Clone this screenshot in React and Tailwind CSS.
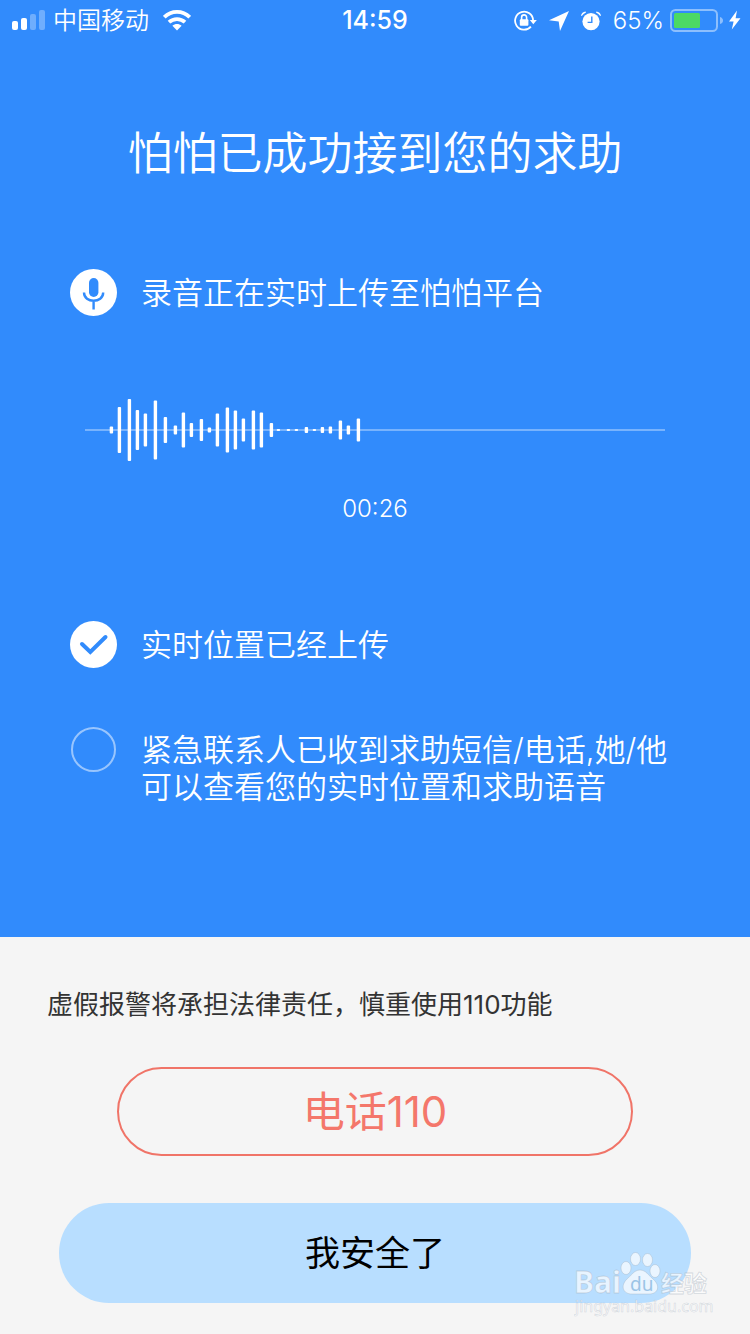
import React from 'react';

// [x, alto] de cada barra, centradas sobre la línea base
const BARS = [
  [26, 7], [34, 46], [44, 62], [52, 40], [60, 33], [70, 59], [80, 26], [90, 9],
  [98, 35], [106, 14], [116, 22], [124, 5], [132, 33], [142, 45], [150, 39], [158, 23],
  [168, 39], [176, 35], [186, 14], [193, 2], [203, 2], [211, 2], [221, 6], [229, 2],
  [237, 6], [245, 7], [255, 19], [263, 9], [273, 23],
];

const SignalIcon = () => (
  <svg width="34" height="22" viewBox="0 0 34 22" fill="#fff" aria-hidden="true">
    <rect x="0" y="11" width="6" height="9" rx="2" />
    <rect x="9" y="8" width="6" height="12" rx="2" />
    <rect x="18" y="4" width="6" height="16" rx="2" opacity="0.3" />
    <rect x="27" y="0" width="6" height="20" rx="2" opacity="0.3" />
  </svg>
);

const WifiIcon = () => (
  <svg width="28" height="22" viewBox="0 0 28 22" fill="none" stroke="#fff" strokeWidth="3.8" aria-hidden="true">
    <path d="M1.3 7.2C8.4 .2 19.6 .2 26.7 7.2" />
    <path d="M6 12.2C10.6 8 17.4 8 22 12.2" />
    <path d="M14 20.4L9.4 15.8C12 13.4 16 13.4 18.6 15.8Z" fill="#fff" stroke="none" />
  </svg>
);

const RotationLockIcon = () => (
  <svg width="23" height="22" viewBox="0 0 23 22" fill="none" stroke="#fff" aria-hidden="true">
    <path d="M16.9 16.6A9 9 0 1 1 19.1 10.4" strokeWidth="1.8" />
    <path d="M15.8 10H22.8L19.3 14.2Z" fill="#fff" stroke="none" />
    <rect x="5.8" y="9.3" width="8.6" height="6.4" rx="1" fill="#fff" stroke="none" />
    <path d="M7.6 10V7.4a2.5 2.5 0 0 1 5 0V10" strokeWidth="1.6" />
  </svg>
);

const LocationIcon = () => (
  <svg width="20" height="20" viewBox="0 0 20 20" fill="#fff" aria-hidden="true">
    <path d="M20 0L11 20L9.7 10.4L0 9.2Z" />
  </svg>
);

const AlarmIcon = () => (
  <svg width="20" height="20" viewBox="0 0 20 20" aria-hidden="true">
    <circle cx="10" cy="10.6" r="8.6" fill="#fff" />
    <path d="M0 4.6Q.8 1 4.6 .6L5 1.4Q2.4 2.6 .8 5ZM20 4.6Q19.2 1 15.4 .6L15 1.4Q17.6 2.6 19.2 5Z" fill="#fff" />
    <path d="M10.8 5.6V11.4H6.6" stroke="#318bfc" strokeWidth="1.4" fill="none" />
  </svg>
);

const BatteryIcon = () => (
  <svg width="72" height="24" viewBox="0 0 72 24" aria-hidden="true">
    <rect x="1" y="1" width="46" height="21" rx="4.5" fill="none" stroke="#fff" strokeOpacity="0.45" strokeWidth="2" />
    <rect x="4" y="4" width="26" height="15" rx="1.5" fill="#4cd964" />
    <path d="M50 8Q53 9 53 11.5T50 15Z" fill="#fff" fillOpacity="0.45" />
    <path d="M67 1.5L59 12.6H63.6L61.8 20.5L70.5 9.2H65.6Z" fill="#fff" />
  </svg>
);

const MicIcon = () => (
  <svg className="h-[47px] w-[47px] shrink-0" viewBox="0 0 47 47" aria-hidden="true">
    <circle cx="23.5" cy="23.5" r="23.5" fill="#fff" />
    <rect x="19" y="9" width="9.4" height="19" rx="4.7" fill="#318bfc" />
    <path d="M14 23.5C14 34.5 33.2 34.5 33.2 23.5M23.6 31.5V40.5" stroke="#318bfc" strokeWidth="2.4" fill="none" />
  </svg>
);

const CheckIcon = () => (
  <svg className="h-[47px] w-[47px] shrink-0" viewBox="0 0 47 47" aria-hidden="true">
    <circle cx="23.5" cy="23.5" r="23.5" fill="#fff" />
    <path d="M12 23L20.3 31L35.5 16" stroke="#318bfc" strokeWidth="4" strokeLinecap="round" fill="none" />
  </svg>
);

const PendingIcon = () => (
  <svg className="h-[47px] w-[47px] shrink-0" viewBox="0 0 47 47" aria-hidden="true">
    <circle cx="23.5" cy="23.5" r="21.5" fill="none" stroke="#fff" strokeOpacity="0.5" strokeWidth="2" />
  </svg>
);

const Waveform = () => (
  <svg className="h-16 w-full" aria-hidden="true">
    <rect x="0" y="31" width="100%" height="2" fill="#fff" fillOpacity="0.35" />
    {BARS.map(([x, h]) => (
      <rect key={x} x={x - 1.3} y={32 - h / 2} width="3.4" height={h} rx="1" fill="#fff" />
    ))}
  </svg>
);

const Watermark = () => (
  <svg
    className="pointer-events-none absolute right-9 bottom-4 h-[66px] w-[140px]"
    viewBox="0 0 140 66"
    fill="#fff"
    fillOpacity="0.7"
    stroke="#9aa7b5"
    strokeOpacity="0.4"
    strokeWidth="0.8"
    aria-hidden="true"
  >
    <text x="0" y="41" fontSize="30" fontWeight="700" fontFamily="Noto Sans, sans-serif">Bai</text>
    <ellipse cx="52" cy="16" rx="5" ry="6.5" />
    <ellipse cx="61.5" cy="7" rx="5" ry="6.5" />
    <ellipse cx="73.5" cy="8" rx="5" ry="6.5" />
    <ellipse cx="81" cy="19" rx="5" ry="6.5" />
    <path d="M66 18C72 18 75 24 79 27C87 34 84 42 75 42H58C49 42 46 34 53 27C57 24 60 18 66 18Z" />
    <text x="56" y="39" fontSize="19" fontFamily="Noto Sans, sans-serif" fill="#9cc4e6" fillOpacity="1" stroke="none">du</text>
    <text x="87" y="40" fontSize="23" fontWeight="700" fontFamily="Noto Sans CJK SC, sans-serif">经验</text>
    <text x="1" y="60" fontSize="16" fontFamily="Noto Sans, sans-serif" strokeWidth="0.6">jingyan.baidu.com</text>
  </svg>
);

const StatusBar = () => (
  <header className="grid h-[42px] grid-cols-[1fr_auto_1fr] items-center px-3 text-2xl">
    <div className="flex items-center font-[350]">
      <SignalIcon />
      <span className="mr-3.5 ml-[7px]">中国移动</span>
      <WifiIcon />
    </div>
    <time className="text-[25px] font-medium">14:59</time>
    <div className="-mr-1 flex items-center justify-end">
      <RotationLockIcon />
      <span className="ml-3"><LocationIcon /></span>
      <span className="ml-3"><AlarmIcon /></span>
      <span className="mr-1.5 ml-3 font-light">65%</span>
      <BatteryIcon />
    </div>
  </header>
);

const StatusRow = ({ icon, children }) => (
  <div className="flex items-start gap-6">
    {icon}
    <p className="pt-[5px] text-[31px] leading-[37px] font-[350]">{children}</p>
  </div>
);

const App = () => {
  return (
    <div className="flex min-h-screen flex-col bg-[#f5f5f5] font-['Inter','Noto_Sans_CJK_SC',sans-serif]">
      <section className="bg-[#318bfc] pb-[132px] text-white">
        <StatusBar />

        <h1 className="mt-[77px] text-center text-[45px] leading-[70px] font-[350]">怕怕已成功接到您的求助</h1>

        <div className="mt-20 px-[70px]">
          <StatusRow icon={<MicIcon />}>录音正在实时上传至怕怕平台</StatusRow>

          <div className="mt-[82px] px-[15px]">
            <Waveform />
            <p className="mt-[31px] text-center text-2xl leading-8 font-light">00:26</p>
          </div>

          <div className="mt-24 flex flex-col gap-[58px]">
            <StatusRow icon={<CheckIcon />}>实时位置已经上传</StatusRow>
            <StatusRow icon={<PendingIcon />}>
              紧急联系人已收到求助短信/电话,她/他
              <br />
              可以查看您的实时位置和求助语音
            </StatusRow>
          </div>
        </div>
      </section>

      <section className="relative flex-1 pt-12 pb-[31px]">
        <p className="px-[47px] text-[26px] leading-10 text-[#333]">虚假报警将承担法律责任，慎重使用110功能</p>
        <div className="mt-[42px] px-[117px]">
          <button
            type="button"
            className="block h-[89px] w-full rounded-full border-2 border-[#f07468] text-[42px] text-[#f4776b]"
          >
            电话110
          </button>
        </div>
        <div className="mt-[47px] px-[59px]">
          <button type="button" className="block h-[100px] w-full rounded-full bg-[#b8deff] text-[35px] text-black">
            我安全了
          </button>
        </div>
        <Watermark />
      </section>
    </div>
  );
};

export default App;
